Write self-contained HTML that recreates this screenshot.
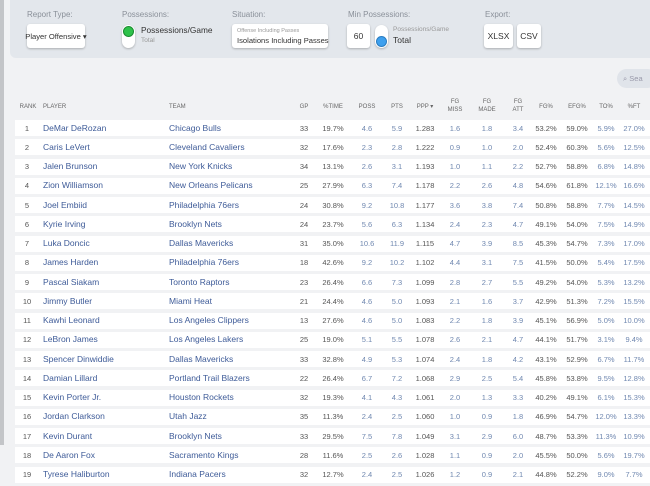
<!DOCTYPE html>
<html><head><meta charset="utf-8"><style>
*{margin:0;padding:0;box-sizing:border-box}
body{width:650px;height:486px;overflow:hidden;background:#f1f2f4;font-family:"Liberation Sans",sans-serif;position:relative}
.strip{position:absolute;left:0;top:0;width:4px;height:445px;background:#c3c5c8}
.panel{position:absolute;left:10px;top:0;width:640px;height:58px;background:#e3e7ec;border-bottom-left-radius:6px}
.lbl{position:absolute;top:10px;font-size:8px;color:#8a9099}
.box{position:absolute;top:24px;height:24px;background:#fff;border-radius:3px;box-shadow:0 1px 2px rgba(0,0,0,.25);font-size:8.5px;color:#333;display:flex;align-items:center;justify-content:center;white-space:nowrap}
.tog{position:absolute;top:25px;width:13px;height:23px;background:#fff;border-radius:7px;box-shadow:0 1px 2px rgba(0,0,0,.25)}
.dot{position:absolute;left:1px;width:11px;height:11px;border-radius:50%}
.t{position:absolute;font-size:8.5px;color:#333;white-space:nowrap}
.s{position:absolute;font-size:6.5px;color:#999;white-space:nowrap}
.search{position:absolute;left:617px;top:69px;width:40px;height:19px;background:#e0e4ea;border-radius:10px;font-size:7.5px;color:#99a;padding:5px 0 0 6px;white-space:nowrap}
.hd{position:absolute;font-size:6px;color:#666;text-align:center;line-height:8px;width:40px}
.row{position:absolute;left:15px;width:640px;height:16px;background:#fff}
.row span{position:absolute;top:3.5px;font-size:7.5px;line-height:9px;white-space:nowrap}
.r{left:0;width:24px;text-align:center;color:#555}
.p{left:28px;color:#3e5b98;font-size:8.5px!important}
.tm{left:154px;color:#3e5b98;font-size:8.5px!important}
.n{width:40px;text-align:center;color:#555}
.b{color:#7088b0}
.a{left:269px}.c{left:298px}.d{left:332px}.e{left:362px}.f{left:390px}.g{left:420px}.h{left:452px}.i{left:483px}.j{left:511px}.k{left:542px}.l{left:571px}.m{left:599px}
</style></head><body>
<div class="strip"></div>
<div class="panel"></div>
<div class="lbl" style="left:27px">Report Type:</div>
<div class="box" style="left:27px;width:58px;font-size:7.6px">Player Offensive ▾</div>
<div class="lbl" style="left:122px">Possessions:</div>
<div class="tog" style="left:122px"><div class="dot" style="top:1px;background:#2ec24a;border:1px solid #1a8a30"></div></div>
<div class="t" style="left:141px;top:25px;font-size:8.3px">Possessions/Game</div>
<div class="s" style="left:141px;top:37px">Total</div>
<div class="lbl" style="left:232px">Situation:</div>
<div class="box" style="left:232px;width:96px;display:block">
<div class="s" style="left:5px;top:4px;font-size:5.5px">Offense Including Passes</div>
<div class="t" style="left:5px;top:12px;font-size:7.6px">Isolations Including Passes</div></div>
<div class="lbl" style="left:348px">Min Possessions:</div>
<div class="box" style="left:347px;width:23px">60</div>
<div class="tog" style="left:375px"><div class="dot" style="top:11px;background:#3ea0ee;border:1px solid #2a7cc0"></div></div>
<div class="s" style="left:393px;top:26px">Possessions/Game</div>
<div class="t" style="left:393px;top:35px">Total</div>
<div class="lbl" style="left:485px">Export:</div>
<div class="box" style="left:484px;width:29px">XLSX</div>
<div class="box" style="left:517px;width:24px">CSV</div>
<div class="search">⌕ Sea</div>

<div class="hd" style="left:8px;top:103px">RANK</div>
<div class="hd" style="left:43px;top:103px;text-align:left">PLAYER</div>
<div class="hd" style="left:169px;top:103px;text-align:left">TEAM</div>
<div class="hd" style="left:284px;top:103px">GP</div>
<div class="hd" style="left:313px;top:103px">%TIME</div>
<div class="hd" style="left:347px;top:103px">POSS</div>
<div class="hd" style="left:377px;top:103px">PTS</div>
<div class="hd" style="left:405px;top:103px">PPP ▾</div>
<div class="hd" style="left:435px;top:98px">FG<br>MISS</div>
<div class="hd" style="left:467px;top:98px">FG<br>MADE</div>
<div class="hd" style="left:498px;top:98px">FG<br>ATT</div>
<div class="hd" style="left:526px;top:103px">FG%</div>
<div class="hd" style="left:557px;top:103px">EFG%</div>
<div class="hd" style="left:586px;top:103px">TO%</div>
<div class="hd" style="left:614px;top:103px">%FT</div>

<div class="row" style="top:120px"><span class="r">1</span><span class="p">DeMar DeRozan</span><span class="tm">Chicago Bulls</span><span class="n a">33</span><span class="n c">19.7%</span><span class="n b d">4.6</span><span class="n b e">5.9</span><span class="n f">1.283</span><span class="n b g">1.6</span><span class="n b h">1.8</span><span class="n b i">3.4</span><span class="n j">53.2%</span><span class="n k">59.0%</span><span class="n b l">5.9%</span><span class="n b m">27.0%</span></div>
<div class="row" style="top:139.25px"><span class="r">2</span><span class="p">Caris LeVert</span><span class="tm">Cleveland Cavaliers</span><span class="n a">32</span><span class="n c">17.6%</span><span class="n b d">2.3</span><span class="n b e">2.8</span><span class="n f">1.222</span><span class="n b g">0.9</span><span class="n b h">1.0</span><span class="n b i">2.0</span><span class="n j">52.4%</span><span class="n k">60.3%</span><span class="n b l">5.6%</span><span class="n b m">12.5%</span></div>
<div class="row" style="top:158.5px"><span class="r">3</span><span class="p">Jalen Brunson</span><span class="tm">New York Knicks</span><span class="n a">34</span><span class="n c">13.1%</span><span class="n b d">2.6</span><span class="n b e">3.1</span><span class="n f">1.193</span><span class="n b g">1.0</span><span class="n b h">1.1</span><span class="n b i">2.2</span><span class="n j">52.7%</span><span class="n k">58.8%</span><span class="n b l">6.8%</span><span class="n b m">14.8%</span></div>
<div class="row" style="top:177.75px"><span class="r">4</span><span class="p">Zion Williamson</span><span class="tm">New Orleans Pelicans</span><span class="n a">25</span><span class="n c">27.9%</span><span class="n b d">6.3</span><span class="n b e">7.4</span><span class="n f">1.178</span><span class="n b g">2.2</span><span class="n b h">2.6</span><span class="n b i">4.8</span><span class="n j">54.6%</span><span class="n k">61.8%</span><span class="n b l">12.1%</span><span class="n b m">16.6%</span></div>
<div class="row" style="top:197px"><span class="r">5</span><span class="p">Joel Embiid</span><span class="tm">Philadelphia 76ers</span><span class="n a">24</span><span class="n c">30.8%</span><span class="n b d">9.2</span><span class="n b e">10.8</span><span class="n f">1.177</span><span class="n b g">3.6</span><span class="n b h">3.8</span><span class="n b i">7.4</span><span class="n j">50.8%</span><span class="n k">58.8%</span><span class="n b l">7.7%</span><span class="n b m">14.5%</span></div>
<div class="row" style="top:216.25px"><span class="r">6</span><span class="p">Kyrie Irving</span><span class="tm">Brooklyn Nets</span><span class="n a">24</span><span class="n c">23.7%</span><span class="n b d">5.6</span><span class="n b e">6.3</span><span class="n f">1.134</span><span class="n b g">2.4</span><span class="n b h">2.3</span><span class="n b i">4.7</span><span class="n j">49.1%</span><span class="n k">54.0%</span><span class="n b l">7.5%</span><span class="n b m">14.9%</span></div>
<div class="row" style="top:235.5px"><span class="r">7</span><span class="p">Luka Doncic</span><span class="tm">Dallas Mavericks</span><span class="n a">31</span><span class="n c">35.0%</span><span class="n b d">10.6</span><span class="n b e">11.9</span><span class="n f">1.115</span><span class="n b g">4.7</span><span class="n b h">3.9</span><span class="n b i">8.5</span><span class="n j">45.3%</span><span class="n k">54.7%</span><span class="n b l">7.3%</span><span class="n b m">17.0%</span></div>
<div class="row" style="top:254.75px"><span class="r">8</span><span class="p">James Harden</span><span class="tm">Philadelphia 76ers</span><span class="n a">18</span><span class="n c">42.6%</span><span class="n b d">9.2</span><span class="n b e">10.2</span><span class="n f">1.102</span><span class="n b g">4.4</span><span class="n b h">3.1</span><span class="n b i">7.5</span><span class="n j">41.5%</span><span class="n k">50.0%</span><span class="n b l">5.4%</span><span class="n b m">17.5%</span></div>
<div class="row" style="top:274px"><span class="r">9</span><span class="p">Pascal Siakam</span><span class="tm">Toronto Raptors</span><span class="n a">23</span><span class="n c">26.4%</span><span class="n b d">6.6</span><span class="n b e">7.3</span><span class="n f">1.099</span><span class="n b g">2.8</span><span class="n b h">2.7</span><span class="n b i">5.5</span><span class="n j">49.2%</span><span class="n k">54.0%</span><span class="n b l">5.3%</span><span class="n b m">13.2%</span></div>
<div class="row" style="top:293.25px"><span class="r">10</span><span class="p">Jimmy Butler</span><span class="tm">Miami Heat</span><span class="n a">21</span><span class="n c">24.4%</span><span class="n b d">4.6</span><span class="n b e">5.0</span><span class="n f">1.093</span><span class="n b g">2.1</span><span class="n b h">1.6</span><span class="n b i">3.7</span><span class="n j">42.9%</span><span class="n k">51.3%</span><span class="n b l">7.2%</span><span class="n b m">15.5%</span></div>
<div class="row" style="top:312.5px"><span class="r">11</span><span class="p">Kawhi Leonard</span><span class="tm">Los Angeles Clippers</span><span class="n a">13</span><span class="n c">27.6%</span><span class="n b d">4.6</span><span class="n b e">5.0</span><span class="n f">1.083</span><span class="n b g">2.2</span><span class="n b h">1.8</span><span class="n b i">3.9</span><span class="n j">45.1%</span><span class="n k">56.9%</span><span class="n b l">5.0%</span><span class="n b m">10.0%</span></div>
<div class="row" style="top:331.75px"><span class="r">12</span><span class="p">LeBron James</span><span class="tm">Los Angeles Lakers</span><span class="n a">25</span><span class="n c">19.0%</span><span class="n b d">5.1</span><span class="n b e">5.5</span><span class="n f">1.078</span><span class="n b g">2.6</span><span class="n b h">2.1</span><span class="n b i">4.7</span><span class="n j">44.1%</span><span class="n k">51.7%</span><span class="n b l">3.1%</span><span class="n b m">9.4%</span></div>
<div class="row" style="top:351px"><span class="r">13</span><span class="p">Spencer Dinwiddie</span><span class="tm">Dallas Mavericks</span><span class="n a">33</span><span class="n c">32.8%</span><span class="n b d">4.9</span><span class="n b e">5.3</span><span class="n f">1.074</span><span class="n b g">2.4</span><span class="n b h">1.8</span><span class="n b i">4.2</span><span class="n j">43.1%</span><span class="n k">52.9%</span><span class="n b l">6.7%</span><span class="n b m">11.7%</span></div>
<div class="row" style="top:370.25px"><span class="r">14</span><span class="p">Damian Lillard</span><span class="tm">Portland Trail Blazers</span><span class="n a">22</span><span class="n c">26.4%</span><span class="n b d">6.7</span><span class="n b e">7.2</span><span class="n f">1.068</span><span class="n b g">2.9</span><span class="n b h">2.5</span><span class="n b i">5.4</span><span class="n j">45.8%</span><span class="n k">53.8%</span><span class="n b l">9.5%</span><span class="n b m">12.8%</span></div>
<div class="row" style="top:389.5px"><span class="r">15</span><span class="p">Kevin Porter Jr.</span><span class="tm">Houston Rockets</span><span class="n a">32</span><span class="n c">19.3%</span><span class="n b d">4.1</span><span class="n b e">4.3</span><span class="n f">1.061</span><span class="n b g">2.0</span><span class="n b h">1.3</span><span class="n b i">3.3</span><span class="n j">40.2%</span><span class="n k">49.1%</span><span class="n b l">6.1%</span><span class="n b m">15.3%</span></div>
<div class="row" style="top:408.75px"><span class="r">16</span><span class="p">Jordan Clarkson</span><span class="tm">Utah Jazz</span><span class="n a">35</span><span class="n c">11.3%</span><span class="n b d">2.4</span><span class="n b e">2.5</span><span class="n f">1.060</span><span class="n b g">1.0</span><span class="n b h">0.9</span><span class="n b i">1.8</span><span class="n j">46.9%</span><span class="n k">54.7%</span><span class="n b l">12.0%</span><span class="n b m">13.3%</span></div>
<div class="row" style="top:428px"><span class="r">17</span><span class="p">Kevin Durant</span><span class="tm">Brooklyn Nets</span><span class="n a">33</span><span class="n c">29.5%</span><span class="n b d">7.5</span><span class="n b e">7.8</span><span class="n f">1.049</span><span class="n b g">3.1</span><span class="n b h">2.9</span><span class="n b i">6.0</span><span class="n j">48.7%</span><span class="n k">53.3%</span><span class="n b l">11.3%</span><span class="n b m">10.9%</span></div>
<div class="row" style="top:447.25px"><span class="r">18</span><span class="p">De Aaron Fox</span><span class="tm">Sacramento Kings</span><span class="n a">28</span><span class="n c">11.6%</span><span class="n b d">2.5</span><span class="n b e">2.6</span><span class="n f">1.028</span><span class="n b g">1.1</span><span class="n b h">0.9</span><span class="n b i">2.0</span><span class="n j">45.5%</span><span class="n k">50.0%</span><span class="n b l">5.6%</span><span class="n b m">19.7%</span></div>
<div class="row" style="top:466.5px"><span class="r">19</span><span class="p">Tyrese Haliburton</span><span class="tm">Indiana Pacers</span><span class="n a">32</span><span class="n c">12.7%</span><span class="n b d">2.4</span><span class="n b e">2.5</span><span class="n f">1.026</span><span class="n b g">1.2</span><span class="n b h">0.9</span><span class="n b i">2.1</span><span class="n j">44.8%</span><span class="n k">52.2%</span><span class="n b l">9.0%</span><span class="n b m">7.7%</span></div>
</body></html>
